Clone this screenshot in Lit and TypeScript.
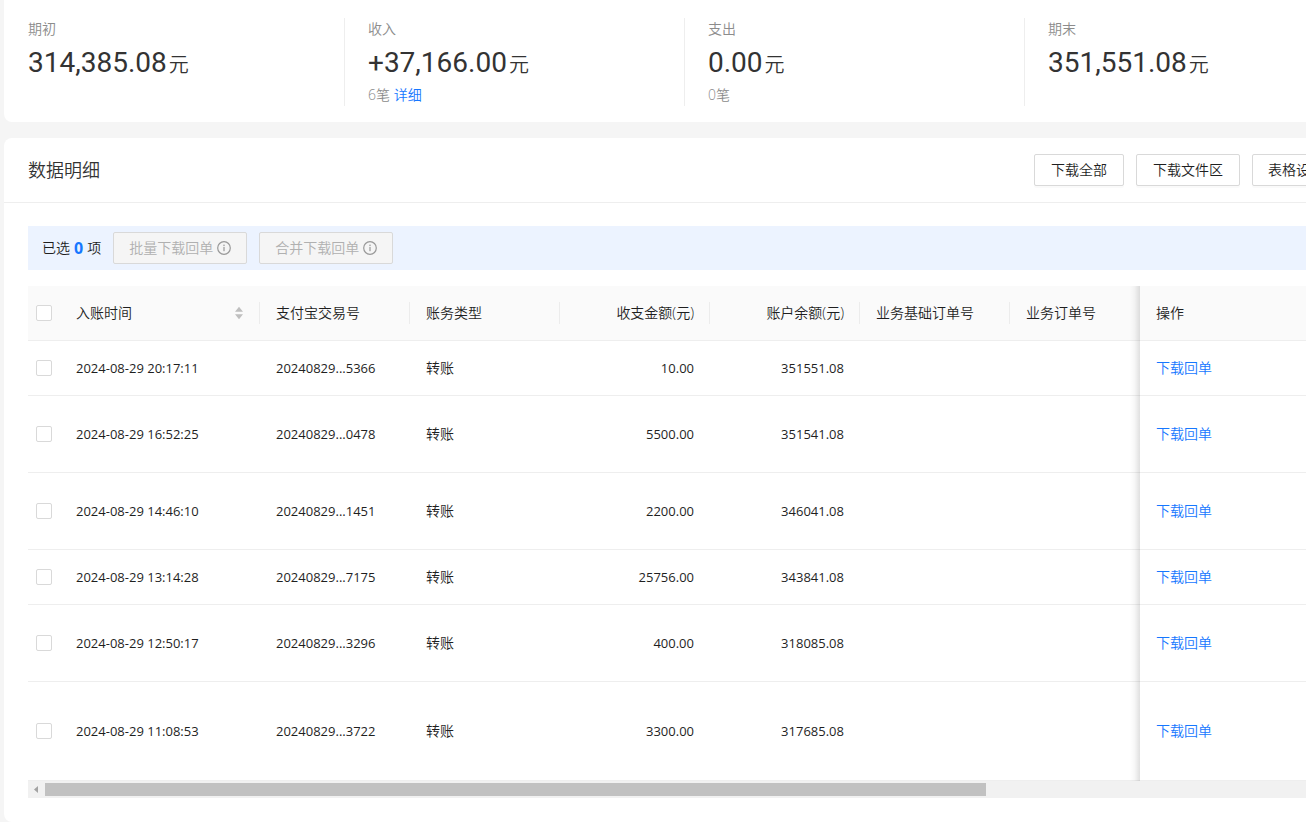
import { LitElement, html, css, nothing } from "lit";
import { customElement } from "lit/decorators.js";

interface Stat {
  label: string;
  value: string;
  count?: string;
  detail?: boolean;
}

interface Entry {
  time: string;
  trade: string;
  amount: string;
  balance: string;
  size: "one" | "two" | "three";
}

const STATS: Stat[] = [
  { label: "期初", value: "314,385.08" },
  { label: "收入", value: "+37,166.00", count: "6笔", detail: true },
  { label: "支出", value: "0.00", count: "0笔" },
  { label: "期末", value: "351,551.08" },
];

const ENTRIES: Entry[] = [
  { time: "2024-08-29 20:17:11", trade: "20240829...5366", amount: "10.00", balance: "351551.08", size: "one" },
  { time: "2024-08-29 16:52:25", trade: "20240829...0478", amount: "5500.00", balance: "351541.08", size: "two" },
  { time: "2024-08-29 14:46:10", trade: "20240829...1451", amount: "2200.00", balance: "346041.08", size: "two" },
  { time: "2024-08-29 13:14:28", trade: "20240829...7175", amount: "25756.00", balance: "343841.08", size: "one" },
  { time: "2024-08-29 12:50:17", trade: "20240829...3296", amount: "400.00", balance: "318085.08", size: "two" },
  { time: "2024-08-29 11:08:53", trade: "20240829...3722", amount: "3300.00", balance: "317685.08", size: "three" },
];

const infoIcon = html`<svg class="info" viewBox="0 0 14 14" aria-hidden="true">
  <circle cx="7" cy="7" r="6.3" fill="none" stroke="currentColor" stroke-width="1.2" />
  <rect x="6.4" y="5.9" width="1.2" height="4.3" fill="currentColor" />
  <circle cx="7" cy="4.3" r="0.8" fill="currentColor" />
</svg>`;

@customElement("app-root")
export class AppRoot extends LitElement {
  static styles = css`
    :host {
      display: block;
      overflow: hidden;
      background: #f5f5f5;
      color: #1f1f1f;
      font-family: "Open Sans", "Noto Sans CJK SC", sans-serif;
      font-size: 14px;
      font-weight: 350;
      line-height: 22px;
    }
    * {
      box-sizing: border-box;
    }
    .page {
      display: flex;
      flex-direction: column;
      gap: 16px;
      min-width: 1364px;
      padding-left: 4px;
    }
    .card {
      background: #fff;
      border-radius: 8px;
    }
    .stats {
      display: grid;
      grid-template-columns: repeat(4, 1fr);
      padding: 18px 0 16px;
      border-radius: 0 0 8px 8px;
    }
    .stat {
      min-height: 88px;
      padding-left: 23px;
      border-left: 1px solid #eee;
    }
    .stat:first-child {
      border-left-color: transparent;
    }
    .label,
    .count {
      color: #8c8c8c;
    }
    .value {
      display: flex;
      align-items: baseline;
      gap: 2px;
      height: 44px;
      line-height: 46px;
      color: #333;
    }
    .figure {
      font-family: Roboto, sans-serif;
      font-size: 28px;
      font-weight: 400;
    }
    .unit {
      font-size: 20px;
    }
    a {
      color: #1677ff;
      text-decoration: none;
    }
    .head {
      display: flex;
      align-items: center;
      justify-content: space-between;
      height: 65px;
      padding: 0 24px;
      border-bottom: 1px solid #eee;
    }
    h2 {
      margin: 0;
      font-size: 18px;
      font-weight: inherit;
      color: #333;
    }
    .actions {
      display: flex;
      gap: 12px;
    }
    button {
      height: 32px;
      padding: 0 16px;
      border: 1px solid #d9d9d9;
      border-radius: 2px;
      background: #fff;
      box-shadow: 0 2px 0 rgba(0, 0, 0, 0.02);
      color: #1f1f1f;
      font: inherit;
      white-space: nowrap;
    }
    button.settings {
      padding: 0 15px;
    }
    button:disabled {
      display: flex;
      align-items: center;
      gap: 4px;
      padding: 0 15px;
      background: #f5f5f5;
      box-shadow: none;
      color: #b0b0b0;
    }
    .info {
      width: 14px;
      height: 14px;
      color: #999;
    }
    .body {
      padding: 23px 24px 24px;
    }
    .selection {
      display: flex;
      align-items: center;
      gap: 12px;
      height: 44px;
      padding-left: 14px;
      margin-bottom: 16px;
      background: #ecf3ff;
    }
    .picked {
      display: flex;
      align-items: center;
      gap: 4px;
    }
    .picked strong {
      color: #1677ff;
      font-size: 16px;
      font-weight: 700;
    }
    table {
      width: 100%;
      table-layout: fixed;
      border-collapse: separate;
      border-spacing: 0;
    }
    .c-check {
      width: 32px;
    }
    .c-time,
    .c-op {
      width: 200px;
    }
    .c-mid {
      width: 150px;
    }
    th,
    td {
      padding: 0 16px;
      border-bottom: 1px solid #eee;
      font-weight: inherit;
      text-align: left;
      white-space: nowrap;
    }
    th {
      position: relative;
      height: 55px;
      background: #fafafa;
    }
    th.split::after {
      content: "";
      position: absolute;
      top: 16px;
      right: 0;
      width: 1px;
      height: 22px;
      background: #ececec;
    }
    .one td {
      height: 55px;
    }
    .two td {
      height: 77px;
    }
    .three td {
      height: 99px;
    }
    th.check,
    td.check {
      padding: 0 8px;
    }
    th.num,
    td.num {
      text-align: right;
    }
    td.digits {
      font-size: 13px;
      font-weight: 400;
    }
    .op {
      position: relative;
      background: #fff;
    }
    th.op {
      background: #fafafa;
    }
    .op::before {
      content: "";
      position: absolute;
      top: 0;
      bottom: -1px;
      left: -10px;
      width: 10px;
      background: linear-gradient(to right, rgba(0, 0, 0, 0), rgba(0, 0, 0, 0.03) 45%, rgba(0, 0, 0, 0.12));
    }
    .sortable {
      display: flex;
      align-items: center;
      justify-content: space-between;
    }
    .sort {
      width: 10px;
      height: 14px;
      fill: #bfbfbf;
    }
    input {
      appearance: none;
      display: block;
      width: 16px;
      height: 16px;
      margin: 0;
      border: 1px solid #d9d9d9;
      border-radius: 2px;
      background: #fff;
    }
    .scrollbar {
      display: flex;
      align-items: center;
      height: 17px;
      background: #f1f1f1;
    }
    .arrow {
      width: 17px;
      height: 17px;
      fill: #a3a3a3;
    }
    .track {
      flex: 1;
    }
    .thumb {
      width: 73.6%;
      height: 13px;
      background: #c1c1c1;
    }
  `;

  render() {
    return html`
      <main class="page">
        <section class="card stats">
          ${STATS.map(
            (s) => html`<div class="stat">
              <div class="label">${s.label}</div>
              <div class="value"><span class="figure">${s.value}</span><span class="unit">元</span></div>
              ${s.count
                ? html`<div class="count">${s.count} ${s.detail ? html`<a href="#">详细</a>` : nothing}</div>`
                : nothing}
            </div>`
          )}
        </section>
        <section class="card">
          <header class="head">
            <h2>数据明细</h2>
            <div class="actions">
              <button>下载全部</button>
              <button>下载文件区</button>
              <button class="settings">表格设置</button>
            </div>
          </header>
          <div class="body">
            <div class="selection">
              <span class="picked">已选<strong>0</strong>项</span>
              <button disabled>批量下载回单${infoIcon}</button>
              <button disabled>合并下载回单${infoIcon}</button>
            </div>
            <table>
              <colgroup>
                <col class="c-check" />
                <col class="c-time" />
                <col class="c-mid" />
                <col class="c-mid" />
                <col class="c-mid" />
                <col class="c-mid" />
                <col class="c-mid" />
                <col />
                <col class="c-op" />
              </colgroup>
              <thead>
                <tr>
                  <th class="check"><input type="checkbox" aria-label="全选" /></th>
                  <th class="split">
                    <div class="sortable">
                      入账时间
                      <svg class="sort" viewBox="0 0 10 14" aria-hidden="true">
                        <path d="M5 0.8 L9 5.8 H1 Z M1 8.2 H9 L5 13.2 Z" />
                      </svg>
                    </div>
                  </th>
                  <th class="split">支付宝交易号</th>
                  <th class="split">账务类型</th>
                  <th class="split num">收支金额(元)</th>
                  <th class="split num">账户余额(元)</th>
                  <th class="split">业务基础订单号</th>
                  <th>业务订单号</th>
                  <th class="op">操作</th>
                </tr>
              </thead>
              <tbody>
                ${ENTRIES.map(
                  (e) => html`<tr class=${e.size}>
                    <td class="check"><input type="checkbox" aria-label=${e.time} /></td>
                    <td class="digits">${e.time}</td>
                    <td class="digits">${e.trade}</td>
                    <td>转账</td>
                    <td class="num digits">${e.amount}</td>
                    <td class="num digits">${e.balance}</td>
                    <td></td>
                    <td></td>
                    <td class="op"><a href="#">下载回单</a></td>
                  </tr>`
                )}
              </tbody>
            </table>
            <div class="scrollbar">
              <svg class="arrow" viewBox="0 0 17 17" aria-hidden="true"><path d="M10 5 V12 L6 8.5 Z" /></svg>
              <div class="track"><div class="thumb"></div></div>
              <svg class="arrow" viewBox="0 0 17 17" aria-hidden="true"><path d="M7 5 V12 L11 8.5 Z" /></svg>
            </div>
          </div>
        </section>
      </main>
    `;
  }
}
